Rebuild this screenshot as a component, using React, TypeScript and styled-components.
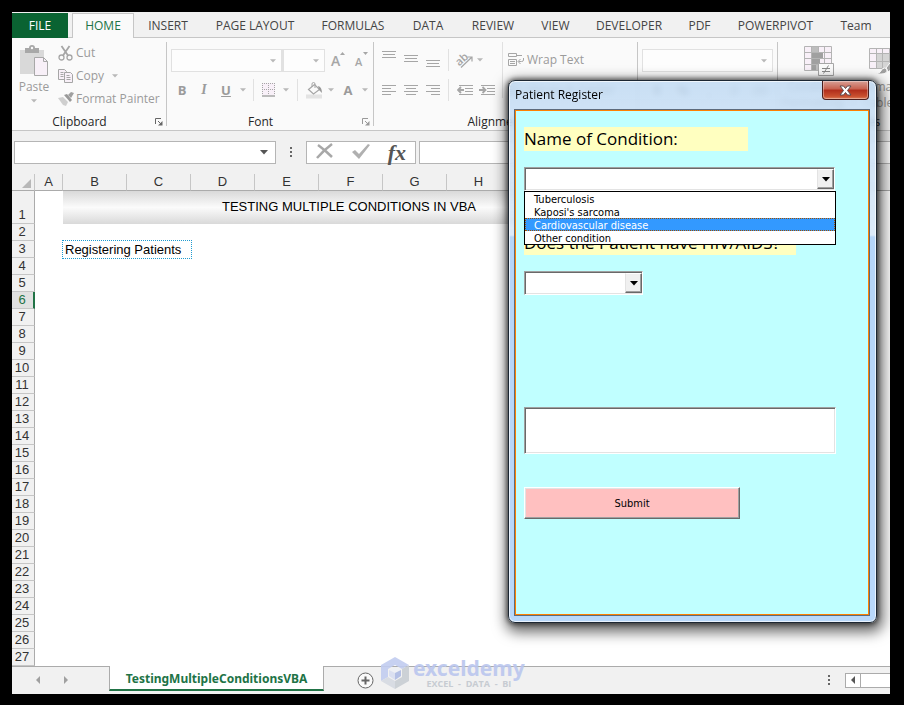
import React, { useState } from "react";
import styled, { createGlobalStyle, css } from "styled-components";

const ui = `"Open Sans", "Noto Sans", sans-serif`;
const grey = "#a6a6a6";

const GlobalStyle = createGlobalStyle`
  *, *::before, *::after { box-sizing: border-box; }
  body { margin: 0; background: #000; }
  button, input, select, textarea { font: inherit; color: inherit; margin: 0; padding: 0; border-radius: 0; }
  button { background: none; border: 0; cursor: pointer; }
`;

const Screen = styled.div`
  display: flex;
  min-height: 100vh;
  padding: 12px 14px 11px 12px;
  background: #000;
  font: 12px/16px ${ui};
  color: #444;
`;

const Workbook = styled.main`
  position: relative;
  display: flex;
  flex-direction: column;
  flex: 1;
  min-width: 0;
  overflow: hidden;
  background: #fff;
`;

/* ---------- Ribbon ---------- */

const TabStrip = styled.nav`
  display: flex;
  height: 26px;
  padding-top: 1px;
  background: #f1f1f1;
  box-shadow: inset 0 -1px 0 #c6c6c6;
`;

const Tab = styled.button<{ $w: number; $kind?: "file" | "active" }>`
  flex: 0 0 ${(p) => p.$w}px;
  height: 25px;
  white-space: nowrap;
  display: flex;
  align-items: center;
  justify-content: center;
  ${(p) => p.$kind === "file" && css`
    background: #0a6332;
    color: #fff;
    margin-right: 4px;
  `}
  ${(p) => p.$kind === "active" && css`
    background: #fafafa;
    color: #217346;
    border: 1px solid #c6c6c6;
    border-bottom: 0;
  `}
`;

const Ribbon = styled.section`
  display: flex;
  height: 93px;
  background: #fafafa;
  border-bottom: 1px solid #c6c6c6;
`;

const Group = styled.div<{ $w: number }>`
  position: relative;
  flex: none;
  width: ${(p) => p.$w}px;
  display: flex;
  flex-direction: column;
  justify-content: space-between;
  padding-top: 4px;
  &::after {
    content: "";
    position: absolute;
    right: 0;
    top: 4px;
    bottom: 4px;
    width: 1px;
    background: #c6c6c6;
  }
`;

const GroupTitle = styled.div`
  display: flex;
  align-items: center;
  gap: 8px;
  height: 16px;
  padding-right: 4px;
  color: #262626;
  span { flex: 1; text-align: center; }
`;

const GroupBody = styled.div`
  display: flex;
  height: 72px;
  padding-left: 4px;
  color: #9b9b9b;
`;

const Rows = styled.div`
  display: flex;
  flex-direction: column;
  padding-top: 6px;
  gap: 6px;
`;

const ToolRow = styled.div<{ $pad?: number }>`
  display: flex;
  align-items: center;
  height: 24px;
  padding-left: ${(p) => p.$pad ?? 0}px;
`;

const Tool = styled.button<{ $w?: number }>`
  width: ${(p) => p.$w ?? 22}px;
  height: 22px;
  flex: none;
  display: flex;
  align-items: center;
  justify-content: center;
  font-size: 13px;
  svg { display: block; flex: none; }
`;

const WideTool = styled.button`
  display: flex;
  align-items: center;
  gap: 2px;
  height: 23px;
  white-space: nowrap;
  svg { flex: none; }
`;

const Divider = styled.i<{ $h?: number }>`
  flex: none;
  width: 1px;
  height: ${(p) => p.$h ?? 22}px;
  margin: 0 5px 0 4px;
  background: #e1e1e1;
`;

const Italic = styled.i`
  font: italic bold 14px/16px "Liberation Serif", serif;
`;

const PasteButton = styled.button`
  width: 36px;
  display: flex;
  flex-direction: column;
  align-items: center;
  padding-top: 3px;
  svg:first-child { margin-bottom: 2px; }
  svg:last-child { margin-top: 4px; }
`;

const ClipboardList = styled.div`
  display: flex;
  flex-direction: column;
  padding-left: 6px;
  margin-top: -1px;
`;

const RibbonCombo = styled.span<{ $w: number }>`
  position: relative;
  flex: none;
  width: ${(p) => p.$w}px;
  height: 23px;
  border: 1px solid #e1e1e1;
  background: #fdfdfd;
  & + & { border-left-width: 2px; }
  select { width: 100%; height: 100%; border: 0; appearance: none; background: none; outline: 0; }
  svg { position: absolute; right: 5px; top: 9px; pointer-events: none; }
`;

const BigTool = styled.button<{ $w: number }>`
  flex: 0 0 ${(p) => p.$w}px;
  display: flex;
  flex-direction: column;
  align-items: center;
  padding-top: 4px;
  white-space: nowrap;
  > svg { flex: none; margin-bottom: 2px; }
  span { display: flex; align-items: center; gap: 6px; }
`;

/* ---------- Formula bar ---------- */

const FormulaBar = styled.section`
  display: flex;
  align-items: flex-start;
  height: 43px;
  padding: 10px 0 0 2px;
  background: #f1f1f1;
`;

const NameBox = styled.label`
  display: flex;
  align-items: center;
  width: 262px;
  height: 23px;
  padding-right: 7px;
  border: 1px solid #b5b5b5;
  background: #fff;
  input { flex: 1; min-width: 0; border: 0; outline: 0; padding-left: 4px; }
`;

const BarDots = styled.span`
  display: flex;
  justify-content: center;
  align-items: center;
  width: 30px;
  height: 23px;
`;

const FormulaButtons = styled.div`
  display: flex;
  align-items: center;
  justify-content: space-between;
  width: 110px;
  height: 23px;
  padding: 0 9px;
  margin-right: 3px;
  border: 1px solid #b5b5b5;
  background: #fff;
`;

const FormulaInput = styled.input`
  flex: 1;
  min-width: 0;
  height: 23px;
  border: 1px solid #b5b5b5;
  border-right: 0;
  outline: 0;
`;

const FxLabel = styled.span`
  display: block;
  font: italic bold 22px/20px "Liberation Serif", serif;
  color: #555;
`;

/* ---------- Sheet ---------- */

const SheetArea = styled.div`
  flex: 1;
  overflow: hidden;
  background: #fff;
`;

const Grid = styled.table`
  width: 883px;
  table-layout: fixed;
  border-collapse: separate;
  border-spacing: 0;
  font: 13px/16px "Liberation Sans", Arial, sans-serif;
  color: #000;
`;

const Cell = styled.td<{ $marked?: boolean }>`
  padding: 0 0 0 2px;
  white-space: nowrap;
  ${(p) => p.$marked && css`
    outline: 1px dotted #1f9bd0;
  `}
`;

const HeadCell = styled.th`
  height: 17px;
  padding: 0;
  font-weight: normal;
  color: #333;
  background: #f1f1f1;
  border-right: 1px solid #c6c6c6;
  border-bottom: 1px solid #ababab;
  svg { display: block; }
`;

const RowHead = styled.th<{ $h: number; $current?: boolean }>`
  height: ${(p) => p.$h}px;
  padding: 0 2px 0 0;
  font-weight: normal;
  vertical-align: bottom;
  color: #333;
  background: #f1f1f1;
  border-right: 1px solid #ababab;
  border-bottom: 1px solid #c6c6c6;
  ${(p) => p.$current && css`
    color: #217346;
    background: #e1e1e1;
    border-right: 2px solid #217346;
    padding-right: 1px;
  `}
`;

const TitleCell = styled.td`
  padding: 0 4px 1px 0;
  text-align: center;
  white-space: nowrap;
  background: linear-gradient(#d9d9d9, #fbfbfb 50%, #d9d9d9);
`;

/* ---------- Bottom bar ---------- */

const BottomBar = styled.footer`
  display: flex;
  height: 28px;
  background: #f1f1f1;
  box-shadow: inset 0 1px 0 #ababab;
`;

const SheetNav = styled.div`
  display: flex;
  align-items: center;
  width: 97px;
  padding-left: 12px;
`;

const SheetTab = styled.button`
  width: 215px;
  height: 25px;
  padding-top: 2px;
  border: 1px solid #ababab;
  border-top: 0;
  border-bottom: 2px solid #217346;
  background: #fff;
  color: #217346;
  font: bold 12px/16px "Noto Sans", sans-serif;
  white-space: nowrap;
  display: flex;
  align-items: center;
  justify-content: center;
`;

const AddSheet = styled.button`
  margin-left: 33px;
  height: 28px;
  svg { display: block; }
`;

const BottomRight = styled.div`
  display: flex;
  align-items: center;
  gap: 14px;
  margin-left: auto;
`;

const ScrollBar = styled.div`
  display: flex;
  width: 45px;
  height: 15px;
  border: 1px solid #ababab;
  border-right: 0;
  background: #fff;
  button { width: 15px; border-right: 1px solid #ababab; display: flex; align-items: center; justify-content: center; }
`;

const Watermark = styled.div`
  position: absolute;
  left: 369px;
  bottom: 5px;
  display: flex;
  align-items: center;
  gap: 4px;
  opacity: 0.9;
`;

const Brand = styled.div`
  display: flex;
  flex-direction: column;
  align-items: center;
  strong { font: bold 21px/22px "Noto Sans", sans-serif; color: #bac6ee; }
  small { font: bold 9px/10px "Open Sans", sans-serif; color: #c3c8cf; white-space: pre; }
`;

/* ---------- Dialog ---------- */

const Dialog = styled.section`
  position: absolute;
  top: 68px;
  right: 13px;
  width: 369px;
  padding: 0 7px 7px 6px;
  border: 1px solid #1c2733;
  border-radius: 7px;
  background: linear-gradient(rgba(190, 217, 243, 0.8), rgba(214, 231, 248, 0.85) 154px, #b5d5f8 156px, #b9d8fa);
  backdrop-filter: blur(3px);
  box-shadow: inset 0 0 0 1px rgba(255, 255, 255, 0.7), 0 0 5px 1px rgba(0, 0, 0, 0.6), 2px 5px 14px 4px rgba(0, 0, 0, 0.6);
`;

const DialogBar = styled.header`
  display: flex;
  justify-content: space-between;
  height: 29px;
  color: #000;
  h1 { margin: 0; padding: 6px 0 0; font: 12px/16px ${ui}; }
`;

const CloseButton = styled.button`
  width: 47px;
  height: 19px;
  border: 1px solid #4c1e1c;
  border-top: 0;
  border-radius: 0 0 4px 4px;
  background: linear-gradient(#d8a096, #c8604e 45%, #b02d1b 50%, #c9502f 85%, #dc7f5c);
  box-shadow: inset 0 0 0 1px rgba(255, 255, 255, 0.35);
  display: flex;
  align-items: center;
  justify-content: center;
`;

const Form = styled.form`
  display: flex;
  flex-direction: column;
  align-items: flex-start;
  padding: 16px 33px 95px 8px;
  border: 1px solid #ff8000;
  box-shadow: 0 0 0 1px #5d6b7c;
  background: #c0ffff;
  font: 11px/13px "DejaVu Sans Condensed", "DejaVu Sans", sans-serif;
  color: #000;
`;

const FieldLabel = styled.label<{ $w: number; $gap?: number }>`
  width: ${(p) => p.$w}px;
  height: 24px;
  margin: ${(p) => p.$gap ?? 0}px 0 16px;
  background: #ffffc0;
  font: 17px/24px ${ui};
  white-space: nowrap;
`;

const sunken = css`
  border: 1px solid;
  border-color: #a0a0a0 #fff #fff #a0a0a0;
  box-shadow: inset 1px 1px 0 #696969, inset -1px -1px 0 #e3e3e3;
  background: #fff;
`;

const ComboBox = styled.div<{ $w: number }>`
  position: relative;
  width: ${(p) => p.$w}px;
  height: 24px;
  padding: 2px;
  ${sunken}
  select { display: block; width: 100%; height: 100%; border: 0; outline: 0; appearance: none; background: #fff; padding-left: 4px; }
`;

const ComboArrow = styled.span`
  position: absolute;
  top: 1px;
  right: 0;
  bottom: 1px;
  width: 17px;
  display: flex;
  align-items: center;
  justify-content: center;
  pointer-events: none;
  background: #f0f0f0;
  border: 1px solid;
  border-color: #fff #696969 #696969 #e3e3e3;
  box-shadow: inset -1px -1px 0 #a0a0a0;
`;

const OptionList = styled.ul`
  position: absolute;
  z-index: 1;
  top: 23px;
  left: -1px;
  right: -2px;
  margin: 0;
  padding: 0;
  list-style: none;
  border: 1px solid #000;
  background: #fff;
`;

const Option = styled.li<{ $on: boolean }>`
  height: 13px;
  padding-left: 9px;
  line-height: 15px;
  white-space: nowrap;
  cursor: default;
  ${(p) => p.$on && css`
    background: #3399ff;
    color: #fff;
    outline: 1px dotted #a05000;
    outline-offset: -1px;
  `}
`;

const Notes = styled.textarea`
  display: block;
  width: 312px;
  height: 47px;
  margin-top: 112px;
  padding: 3px;
  resize: none;
  outline: 0;
  ${sunken}
`;

const SubmitButton = styled.button`
  width: 216px;
  height: 32px;
  margin-top: 33px;
  background: #ffc0c0;
  border: 1px solid;
  border-color: #fff #696969 #696969 #fff;
  box-shadow: inset -1px -1px 0 #a0a0a0, inset 1px 1px 0 #e3e3e3;
`;

/* ---------- Icons ---------- */

const Caret = ({ color = "#b8b8b8", w = 6 }: { color?: string; w?: number }) => (
  <svg width={w} height={w / 2 + 1} viewBox="0 0 8 5"><path d="M0 0h8L4 4.5z" fill={color} /></svg>
);

const Dots = () => (
  <svg width="3" height="11" shapeRendering="crispEdges"><path d="M0 0h2v2H0zM0 4h2v2H0zM0 8h2v2H0z" fill="#666" /></svg>
);

const Launcher = ({ color = "#777" }: { color?: string }) => (
  <svg width="8" height="8" viewBox="0 0 8 8" fill="none" stroke={color}>
    <path d="M.5 6V.5H6M3 3l3 3" /><path d="M7.500 3v4.500H3z" fill={color} stroke="none" />
  </svg>
);

const PasteIcon = () => (
  <svg width="28" height="32" viewBox="0 0 28 32">
    <path d="M0 5h24v24H0z" fill="#d9d9d9" />
    <path d="M5 3h4a3 3 0 0 1 6 0h4v5H5z" fill="#a8a8a8" /><circle cx="12" cy="3" r="1.200" fill="#fafafa" />
    <path d="M14.500 12.500h9l4 4v14h-13z" fill="#f8f0f8" stroke="#a8a8a8" />
    <path d="M23.500 12.500v4h4" fill="none" stroke="#a8a8a8" />
  </svg>
);

const CutIcon = () => (
  <svg width="16" height="16" viewBox="0 0 16 16" fill="none" stroke={grey} strokeWidth="1.300">
    <circle cx="3.500" cy="12.500" r="2.500" /><circle cx="11.500" cy="12.500" r="2.500" />
    <path d="M5 10.500L11.500 1M10 10.500L3.500 1" strokeWidth="1.800" />
  </svg>
);

const CopyIcon = () => (
  <svg width="16" height="16" viewBox="0 0 16 16" fill="#f8f0f8" stroke={grey}>
    <path d="M.5 1.500h6l2 2v8h-8z" /><path d="M2.500 4.500h3M2.500 6.500h3M2.500 8.500h3" />
    <path d="M6.500 4.500h6l2 2v8h-8z" /><path d="M8.500 7.500h3M8.500 9.500h4M8.500 11.500h4" />
  </svg>
);

const PainterIcon = () => (
  <svg width="16" height="16" viewBox="0 0 16 16">
    <path d="M0 7l5-1 5 5-2 4-3-1z" fill="#cfcfcf" />
    <path d="M6 4l3-1 5 6-2 2z" fill="#999" /><path d="M10 4l3-3 3 1-3 5z" fill="#a0a0a0" />
  </svg>
);

const GrowFont = ({ down = false }: { down?: boolean }) => (
  <svg width="16" height="22" viewBox="0 0 16 22">
    <text x="1" y="17" fontFamily="Open Sans, sans-serif" fontWeight="600" fontSize={down ? 11 : 14} fill={grey}>A</text>
    <path d={down ? "M9 3h5l-2.500 3z" : "M10 6h5l-2.500-3z"} fill={grey} />
  </svg>
);

const BordersIcon = () => (
  <svg width="14" height="14" viewBox="0 0 14 14">
    <path d="M0 0h13v12H0z" fill="#f8f0f8" />
    <path d="M0 .5h13M0 6.500h13M.5 0v12M6.500 0v12M12.500 0v12" stroke={grey} strokeDasharray="1 1" fill="none" />
    <path d="M0 13h13" stroke={grey} strokeWidth="1.500" />
  </svg>
);

const BucketIcon = () => (
  <svg width="17" height="17" viewBox="0 0 17 17">
    <path d="M0 12.500h16v4H0z" fill="#e3e3e3" />
    <path d="M2.500 7.500l6-5 5 5-6 4.500z" fill="none" stroke={grey} strokeWidth="1.200" />
    <path d="M6 5V2a1.500 1.500 0 0 1 3 0v4" fill="none" stroke={grey} /><path d="M12 4q4 1 4 7l-3-3z" fill="#999" />
  </svg>
);

const Lines = ({ y, xs }: { y: number; xs: [number, number][] }) => (
  <svg width="14" height="22" viewBox="0 0 14 22" shapeRendering="crispEdges">
    {xs.map(([a, b], i) => <rect key={i} x={a} y={y + i * 3} width={b - a} height="1" fill={grey} />)}
  </svg>
);

const OrientationIcon = () => (
  <svg width="20" height="22" viewBox="0 0 20 22">
    <text x="2" y="15" fontFamily="Open Sans, sans-serif" fontWeight="600" fontSize="11" fill={grey} transform="rotate(-42 7 12)">ab</text>
    <path d="M7 18.500L18 8M13.500 8H18v4.500" stroke={grey} strokeWidth="1.200" fill="none" />
  </svg>
);

const IndentIcon = ({ right = false }: { right?: boolean }) => (
  <svg width="16" height="12" viewBox="0 0 16 12" fill="none" stroke={grey}>
    <path d="M2 1.500h14M8 4.500h8M8 7.500h8M2 10.500h14" />
    <path d={right ? "M0 6h6M3.500 3l3 3-3 3" : "M7 6H1M4 3L1 6l3 3"} strokeWidth="1.800" />
  </svg>
);

const WrapIcon = () => (
  <svg width="17" height="16" viewBox="0 0 17 16" fill="none" stroke={grey}>
    <path d="M.5 1.500h8v3h-8zM8 3.500h6M.5 7.500h8v6h-8zM2 9.500h5M2 11.500h5" />
    <path d="M15.500 6v2q0 1.500-2 1.500h-3M12.500 7L10 9.500l2.500 2.500" />
  </svg>
);

const ConditionalIcon = () => (
  <svg width="30" height="31" viewBox="0 0 30 31">
    <path d="M.5.5h27v24H.5z" fill="#f8f0f8" />
    <path d="M7 0h7v25H7z" fill="#bdbdbd" /><path d="M8 7h11v5H8zM8 13h8v5H8zM8 19h4v5H8z" fill="#a0a0a0" />
    <path d="M.5.5h27v24H.5zM.5 6.500h27M.5 12.500h27M.5 18.500h27M7.500 0v25M14.500 0v6M20.500 0v25" fill="none" stroke="#b4b4b4" />
    <path d="M14.500 17.500h15v12h-15z" fill="#fafafa" stroke={grey} />
    <path d="M18 22.500h8M18 25.500h8M24.500 19.500l-5 8" stroke="#888" fill="none" />
  </svg>
);

const FormatTableIcon = () => (
  <svg width="30" height="31" viewBox="0 0 30 31">
    <path d="M.5 2.500h28v20H.5z" fill="#f8f0f8" /><path d="M7 8h21v14H7z" fill="#d4d4d4" />
    <path d="M.5 2.500h28v20H.5zM0 7.500h28M0 15.500h28M7.500 2v21M13.500 2v21M20.500 2v21" fill="none" stroke="#b4b4b4" />
    <path d="M7 28q5-1 6-5 3-2 5 0 1 5-6 5zM17 22l10-13v11l-8 6z" fill="#a0a0a0" stroke="#fafafa" />
  </svg>
);

const Hexagon = () => (
  <svg width="28" height="32" viewBox="0 0 28 32">
    <path d="M14 0l14 8-7 4-7-4-7 4v8l-7 4V8z" fill="#c2cdf0" />
    <path d="M28 8v16l-14 8v-8l7-4v-8z" fill="#c9ced4" /><path d="M0 24l7-4 7 4v8z" fill="#d6dae2" />
    <path d="M14 10l6 3-6 3-6-3z" fill="#eef0f6" /><path d="M14 16l6-3v6l-6 4z" fill="#aebbe4" /><path d="M14 16l-6-3v6l6 4z" fill="#d9dff2" />
  </svg>
);

/* ---------- Parts ---------- */

const TABS: { name: string; w: number; kind?: "file" | "active" }[] = [
  { name: "FILE", w: 56, kind: "file" }, { name: "HOME", w: 62, kind: "active" },
  { name: "INSERT", w: 68 }, { name: "PAGE LAYOUT", w: 106 }, { name: "FORMULAS", w: 90 },
  { name: "DATA", w: 60 }, { name: "REVIEW", w: 70 }, { name: "VIEW", w: 55 },
  { name: "DEVELOPER", w: 92 }, { name: "PDF", w: 49 }, { name: "POWERPIVOT", w: 103 }, { name: "Team", w: 58 },
];

const Combo = ({ label, w }: { label: string; w: number }) => (
  <RibbonCombo $w={w}><select aria-label={label} /><Caret /></RibbonCombo>
);

const Heading = ({ name, launcher }: { name: string; launcher?: string }) => (
  <GroupTitle><span>{name}</span>{launcher ? <Launcher color={launcher} /> : null}</GroupTitle>
);

const full: [number, number] = [0, 14];

function RibbonPanel() {
  return (
    <Ribbon>
      <Group $w={155}>
        <GroupBody>
          <PasteButton><PasteIcon />Paste<Caret /></PasteButton>
          <ClipboardList>
            <WideTool><CutIcon />Cut</WideTool>
            <WideTool><CopyIcon />Copy&nbsp;&nbsp;<Caret /></WideTool>
            <WideTool><PainterIcon />Format Painter</WideTool>
          </ClipboardList>
        </GroupBody>
        <Heading name="Clipboard" launcher="#666" />
      </Group>
      <Group $w={207}>
        <GroupBody>
          <Rows>
            <ToolRow>
              <Combo label="Font" w={111} /><Combo label="Font size" w={43} />
              <Tool $w={26} aria-label="Increase font size"><GrowFont /></Tool>
              <Tool aria-label="Decrease font size"><GrowFont down /></Tool>
            </ToolRow>
            <ToolRow>
              <Tool><b>B</b></Tool>
              <Tool><Italic>I</Italic></Tool>
              <Tool><b><u>U</u></b></Tool>
              <Tool $w={12} aria-label="Underline style"><Caret /></Tool>
              <Divider />
              <Tool $w={20} aria-label="Borders"><BordersIcon /></Tool>
              <Tool $w={14} aria-label="Border style"><Caret /></Tool>
              <Divider />
              <Tool aria-label="Fill color"><BucketIcon /></Tool>
              <Tool $w={12} aria-label="Fill choices"><Caret /></Tool>
              <Tool aria-label="Font color"><b>A</b></Tool>
              <Tool $w={12} aria-label="Font color choices"><Caret /></Tool>
            </ToolRow>
          </Rows>
        </GroupBody>
        <Heading name="Font" launcher="#999" />
      </Group>
      <Group $w={264}>
        <GroupBody>
          <Rows>
            <ToolRow>
              <Tool aria-label="Top align"><Lines y={2} xs={[full, [1, 13], full]} /></Tool>
              <Tool aria-label="Middle align"><Lines y={6} xs={[full, [1, 13], full]} /></Tool>
              <Tool aria-label="Bottom align"><Lines y={11} xs={[full, [1, 13], full]} /></Tool>
              <Divider />
              <Tool $w={20} aria-label="Orientation"><OrientationIcon /></Tool>
              <Tool $w={12} aria-label="Orientation choices"><Caret /></Tool>
            </ToolRow>
            <ToolRow>
              <Tool aria-label="Align left"><Lines y={6} xs={[full, [0, 9], full, [0, 9]]} /></Tool>
              <Tool aria-label="Center"><Lines y={6} xs={[full, [2, 12], full, [2, 12]]} /></Tool>
              <Tool aria-label="Align right"><Lines y={6} xs={[full, [5, 14], full, [5, 14]]} /></Tool>
              <Divider />
              <Tool aria-label="Decrease indent"><IndentIcon /></Tool>
              <Tool aria-label="Increase indent"><IndentIcon right /></Tool>
            </ToolRow>
          </Rows>
          <Divider $h={56} />
          <Rows>
            <ToolRow><WideTool><WrapIcon />Wrap Text</WideTool></ToolRow>
            <ToolRow><WideTool><WrapIcon />Merge &amp; Center</WideTool></ToolRow>
          </Rows>
        </GroupBody>
        <Heading name="Alignment" launcher="#999" />
      </Group>
      <Group $w={140}>
        <GroupBody>
          <Rows>
            <ToolRow><Combo label="Number format" w={131} /></ToolRow>
            <ToolRow $pad={4}>
              <Tool><b>$</b></Tool><Tool $w={30}><b>%</b></Tool><Tool><b>,</b></Tool><Tool $w={26}>.0</Tool><Tool $w={26}>.00</Tool>
            </ToolRow>
          </Rows>
        </GroupBody>
        <Heading name="Number" launcher="#999" />
      </Group>
      <Group $w={176}>
        <GroupBody>
          <BigTool $w={74}><ConditionalIcon />Conditional<span>Formatting<Caret /></span></BigTool>
          <BigTool $w={56}><FormatTableIcon />Format as<span>Table<Caret /></span></BigTool>
        </GroupBody>
        <Heading name="Styles" />
      </Group>
    </Ribbon>
  );
}

const COLUMNS = "ABCDEFGHIJKLMN".split("");

function Sheet() {
  return (
    <SheetArea>
      <Grid>
        <colgroup>
          <col width="23" /><col width="28" />
          {COLUMNS.slice(1).map((c) => <col key={c} width="64" />)}
        </colgroup>
        <thead>
          <tr>
            <HeadCell aria-label="Select all">
              <svg width="22" height="16" viewBox="0 0 22 16"><path d="M19 5v9h-9z" fill="#b8b8b8" /></svg>
            </HeadCell>
            {COLUMNS.map((c) => <HeadCell key={c}>{c}</HeadCell>)}
          </tr>
        </thead>
        <tbody>
          {Array.from({ length: 27 }, (_, i) => i + 1).map((n) => (
            <tr key={n}>
              <RowHead $h={n === 1 ? 33 : 17} $current={n === 6}>{n}</RowHead>
              <Cell />
              {n === 1 ? <TitleCell colSpan={9}>TESTING MULTIPLE CONDITIONS IN VBA</TitleCell>
                : n === 3 ? <Cell colSpan={2} $marked>Registering Patients</Cell>
                : <Cell colSpan={9} />}
            </tr>
          ))}
        </tbody>
      </Grid>
    </SheetArea>
  );
}

const CONDITIONS = ["Tuberculosis", "Kaposi's sarcoma", "Cardiovascular disease", "Other condition"];

const ArrowFace = () => <ComboArrow><Caret color="#000" w={8} /></ComboArrow>;

function PatientDialog() {
  const [active, setActive] = useState(2);
  const [open, setOpen] = useState(true);
  const [condition, setCondition] = useState("");
  return (
    <Dialog role="dialog" aria-labelledby="dialog-title">
      <DialogBar>
        <h1 id="dialog-title">Patient Register</h1>
        <CloseButton aria-label="Close">
          <svg width="13" height="11" viewBox="0 0 13 11">
            <path d="M1 1h3.500l2 2.500L8.500 1H12L8.500 5.500 12 10H8.500l-2-2.500-2 2.500H1l3.500-4.500z" fill="#fff" stroke="#5b4a4e" />
          </svg>
        </CloseButton>
      </DialogBar>
      <Form onSubmit={(e) => e.preventDefault()}>
        <FieldLabel $w={224} htmlFor="condition">Name of Condition:</FieldLabel>
        <ComboBox $w={311}>
          <select id="condition" value={condition} onChange={(e) => setCondition(e.target.value)}>
            <option value="" />
            {CONDITIONS.map((c) => <option key={c}>{c}</option>)}
          </select>
          <ArrowFace />
          {open && (
            <OptionList role="listbox" aria-label="Conditions">
              {CONDITIONS.map((c, i) => (
                <Option key={c} role="option" aria-selected={i === active} $on={i === active}
                  onMouseEnter={() => setActive(i)} onClick={() => { setCondition(c); setOpen(false); }}>{c}</Option>
              ))}
            </OptionList>
          )}
        </ComboBox>
        <FieldLabel $w={272} $gap={40} htmlFor="hiv">Does the Patient have HIV/AIDS?</FieldLabel>
        <ComboBox $w={119}>
          <select id="hiv" defaultValue=""><option value="" /><option>Yes</option><option>No</option></select>
          <ArrowFace />
        </ComboBox>
        <Notes aria-label="Result" />
        <SubmitButton type="submit">Submit</SubmitButton>
      </Form>
    </Dialog>
  );
}

export default function App() {
  return (
    <>
      <GlobalStyle />
      <Screen>
        <Workbook>
          <TabStrip>
            {TABS.map((t) => <Tab key={t.name} $w={t.w} $kind={t.kind}>{t.name}</Tab>)}
          </TabStrip>
          <RibbonPanel />
          <FormulaBar>
            <NameBox><input aria-label="Name box" /><Caret color="#555" w={8} /></NameBox>
            <BarDots><Dots /></BarDots>
            <FormulaButtons>
              <button aria-label="Cancel">
                <svg width="18" height="18" viewBox="0 0 18 18"><path d="M2 3Q9 8 16 15M16 2Q8 8 1 16" fill="none" stroke="#a8a8a8" strokeWidth="2.500" /></svg>
              </button>
              <button aria-label="Enter">
                <svg width="20" height="18" viewBox="0 0 20 18"><path d="M1 10l3-2 4 4L17 2l2 1L8 17z" fill="#b0b0b0" /></svg>
              </button>
              <button aria-label="Insert function"><FxLabel>fx</FxLabel></button>
            </FormulaButtons>
            <FormulaInput aria-label="Formula" />
          </FormulaBar>
          <Sheet />
          <BottomBar>
            <SheetNav>
              <Tool $w={28} aria-label="Previous sheet"><svg width="5" height="8"><path d="M4 0v8L0 4z" fill="#a0a0a0" /></svg></Tool>
              <Tool $w={28} aria-label="Next sheet"><svg width="5" height="8"><path d="M0 0v8l4-4z" fill="#a0a0a0" /></svg></Tool>
            </SheetNav>
            <SheetTab>TestingMultipleConditionsVBA</SheetTab>
            <AddSheet aria-label="New sheet">
              <svg width="17" height="17" viewBox="0 0 17 17" fill="none" stroke="#666">
                <circle cx="8.500" cy="8.500" r="7.500" fill="#fafafa" /><path d="M8.500 4.500v8M4.500 8.500h8" strokeWidth="2" />
              </svg>
            </AddSheet>
            <BottomRight>
              <Dots />
              <ScrollBar>
                <button aria-label="Scroll left"><svg width="5" height="8"><path d="M4 0v8L0 4z" fill="#555" /></svg></button>
              </ScrollBar>
            </BottomRight>
          </BottomBar>
          <Watermark>
            <Hexagon />
            <Brand><strong>exceldemy</strong><small>EXCEL  -  DATA  -  BI</small></Brand>
          </Watermark>
          <PatientDialog />
        </Workbook>
      </Screen>
    </>
  );
}
